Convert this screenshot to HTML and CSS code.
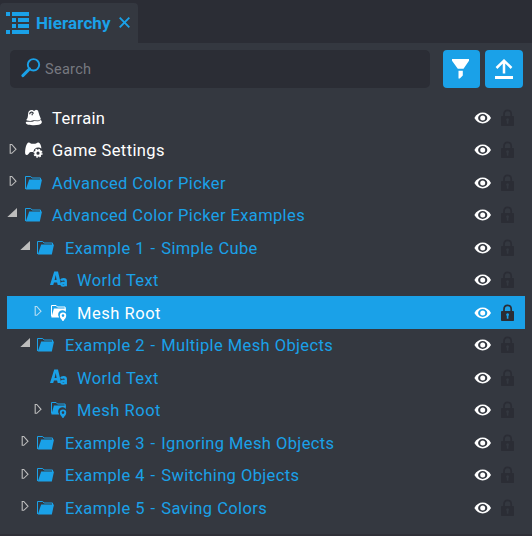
FILE: index.html
```html
<!DOCTYPE html>
<html lang="en">
<head>
<meta charset="utf-8">
<title>Hierarchy</title>
<link rel="stylesheet" href="styles.css">
</head>
<body>
<svg class="defs" aria-hidden="true">
  <symbol id="closed" viewBox="0 0 11 12"><path d="M2.200 1.500v8.800h1.600l4.200-4-4.200-4.800z" fill="none" stroke="currentColor" stroke-width="1.100"/></symbol>
  <symbol id="open" viewBox="0 0 11 12"><path d="M10 1v9H.3z" fill="currentColor"/></symbol>
  <symbol id="folder" viewBox="0 0 18 18"><path d="M.5 15V2.500h5.200l1.400 1.500h8.400v2" fill="none" stroke="currentColor"/><path d="M4.200 5.500h12.800l-2.200 9.900H.8z" fill="currentColor"/></symbol>
  <symbol id="pinfolder" viewBox="0 0 18 18"><path d="M1.500 12.500V1.500h4.600l1.400 1.500h7.600v2" fill="none" stroke="currentColor"/><path d="M3.900 4.500h12.100L15.700 8a4.100 4.100 0 0 0-6.800 4.800l.3.700H1.400z" fill="currentColor"/><path fill-rule="evenodd" d="M13 8.400a3.200 3.200 0 0 1 3.200 3.300c0 2-1.500 3.300-2.800 5.200h-.8c-1.300-1.900-2.800-3.200-2.800-5.200A3.200 3.200 0 0 1 13 8.400zm0 1.900a1.300 1.300 0 1 0 0 2.600 1.300 1.300 0 0 0 0-2.600z" fill="currentColor"/></symbol>
  <symbol id="terrain" viewBox="0 0 18 18"><path d="M1.200 11C2.800 9.700 3 7 3.100 4.700 3.300 2 4.700.9 6.500.9c1.300 0 2 .4 2.500 1.200L11 .8l2 .8 1.400 4.600 1.600 4-2.700 1.200-4.700-.2-3.300.8-3.200-.4z" fill="currentColor"/><path d="M3.200 12.800l4.100-.1 2-.8 3.900.3 2.600-1.200c1 1 1.300 2 .8 3.100-.7 1.500-3.800 2.200-7.600 2.200-4.200 0-7.800-.6-8.200-2.200-.2-1 .5-1.500 2.400-1.300z" fill="currentColor"/><path d="M4.600 5.200C4.900 2.800 7.700 2.500 8.500 4.600M7.200 4.500v1.800" fill="none" stroke="#343840" stroke-width="1.200"/></symbol>
  <symbol id="game" viewBox="0 0 18 18"><path d="M3.700 1.500c1.300-.2 2 1.300 2.800 1.300h3.800c.8 0 1.800-1.600 3.200-1.200 1.800.6 2.800 3.500 2.900 6a5 5 0 0 0-8.100 3.300H5.500C4.200 11.200 3.200 14 1.600 14 .2 14-.1 12.300.2 9.500.5 6.500 1.500 2 3.700 1.500z" fill="currentColor"/><circle cx="13" cy="12.200" r="2.600" fill="none" stroke="currentColor" stroke-width="2"/><circle cx="13" cy="12.200" r="3.900" fill="none" stroke="currentColor" stroke-width="1.400" stroke-dasharray="1.530 1.530"/></symbol>
  <symbol id="textobj" viewBox="0 0 18 18"><path fill-rule="evenodd" d="M4.200.6H8L11.200 14H7.700l-.6-2.400H4L3.200 14H0zM5.800 4L4.600 8.900h2z" fill="currentColor"/><path d="M11 9.500c.7-1.600 4.800-1.900 4.800.5v5.200m0-3.600c-3-.2-4.500.4-4.400 1.900.2 1.600 3.200 1.500 4.400-.2" fill="none" stroke="currentColor" stroke-width="2.300"/></symbol>
  <symbol id="eye" viewBox="0 0 18 12"><path fill-rule="evenodd" d="M.4 6C2.300 2.500 5.200.6 8.700.6S15.100 2.500 17 6c-1.900 3.500-4.800 5.400-8.300 5.400S2.300 9.500.4 6zm3.700 0a4.600 3.900 0 1 0 9.200 0 4.600 3.900 0 1 0-9.200 0z" fill="currentColor"/><circle cx="8.700" cy="6" r="2.500" fill="currentColor"/></symbol>
  <symbol id="lock" viewBox="0 0 14 18"><path d="M3 8V5.200C3 2.800 4.600 1.300 6.600 1.300s3.600 1.500 3.600 3.900V8" fill="none" stroke="currentColor" stroke-width="1.700"/><path fill-rule="evenodd" d="M1.200 7H12c.6 0 1 .4 1 1v8c0 .6-.4 1-1 1H1.200c-.7 0-1.200-.4-1.200-1V8c0-.6.5-1 1.200-1zm5.400 2.300a1.500 1.500 0 0 0-.8 2.700v2.700h1.600V12a1.500 1.500 0 0 0-.8-2.700z" fill="currentColor"/></symbol>
</svg>
<header class="tabs">
  <div class="tab">
    <svg class="tree-icon" viewBox="0 0 23 23"><path d="M0 0h4v4H0zM6 0h17v4H6zM6 6h4v4H6zM12 6h11v4H12zM6 12h4v4H6zM12 12h11v4H12zM0 18h4v4H0zM6 18h17v4H6z" fill="currentColor"/></svg>
    <span class="title">Hierarchy</span>
    <svg class="close" viewBox="0 0 11 11"><path d="M.7.7l9.600 9.600M10.300.7L.7 10.300" stroke="currentColor" stroke-width="1.900"/></svg>
  </div>
</header>
<div class="toolbar">
  <div class="search">
    <svg class="magnifier" viewBox="0 0 20 20"><circle cx="12.500" cy="6.800" r="5.700" fill="none" stroke="currentColor" stroke-width="1.900"/><path d="M8.400 11L2 17.500" stroke="currentColor" stroke-width="3.200" stroke-linecap="round"/></svg>
    <span>Search</span>
  </div>
  <div class="button filter"><svg viewBox="0 0 18 20"><path d="M0 0h17v1.800L11.500 9.800H5.800L0 1.800zM6.500 11.800h4.300v4.700l-3 3H6.500z" fill="currentColor"/></svg></div>
  <div class="button upload"><svg viewBox="0 0 18 20"><path d="M9 14.500V2M1.500 9L9 1.700 16.500 9" fill="none" stroke="currentColor" stroke-width="2.500"/><path d="M0 17h18v3H0z" fill="currentColor"/></svg></div>
</div>
<main class="list">
  <div class="row plain"><span class="arrow"></span><svg class="icon"><use href="#terrain"/></svg><span class="label">Terrain</span><svg class="eye"><use href="#eye"/></svg><svg class="lock"><use href="#lock"/></svg></div>
  <div class="row plain"><svg class="arrow"><use href="#closed"/></svg><svg class="icon"><use href="#game"/></svg><span class="label">Game Settings</span><svg class="eye"><use href="#eye"/></svg><svg class="lock"><use href="#lock"/></svg></div>
  <div class="row"><svg class="arrow"><use href="#closed"/></svg><svg class="icon"><use href="#folder"/></svg><span class="label">Advanced Color Picker</span><svg class="eye"><use href="#eye"/></svg><svg class="lock"><use href="#lock"/></svg></div>
  <div class="row"><svg class="arrow open"><use href="#open"/></svg><svg class="icon"><use href="#folder"/></svg><span class="label">Advanced Color Picker Examples</span><svg class="eye"><use href="#eye"/></svg><svg class="lock"><use href="#lock"/></svg></div>
  <div class="row level1"><svg class="arrow open"><use href="#open"/></svg><svg class="icon"><use href="#folder"/></svg><span class="label">Example 1 <span class="dash">-</span> Simple Cube</span><svg class="eye"><use href="#eye"/></svg><svg class="lock"><use href="#lock"/></svg></div>
  <div class="row level2"><span class="arrow"></span><svg class="icon"><use href="#textobj"/></svg><span class="label">World Text</span><svg class="eye"><use href="#eye"/></svg><svg class="lock"><use href="#lock"/></svg></div>
  <div class="row level2 selected"><svg class="arrow"><use href="#closed"/></svg><svg class="icon"><use href="#pinfolder"/></svg><span class="label mesh">Mesh Root</span><svg class="eye"><use href="#eye"/></svg><svg class="lock"><use href="#lock"/></svg></div>
  <div class="row level1"><svg class="arrow open"><use href="#open"/></svg><svg class="icon"><use href="#folder"/></svg><span class="label">Example 2 <span class="dash">-</span> Multiple Mesh Objects</span><svg class="eye"><use href="#eye"/></svg><svg class="lock"><use href="#lock"/></svg></div>
  <div class="row level2"><span class="arrow"></span><svg class="icon"><use href="#textobj"/></svg><span class="label">World Text</span><svg class="eye"><use href="#eye"/></svg><svg class="lock"><use href="#lock"/></svg></div>
  <div class="row level2"><svg class="arrow"><use href="#closed"/></svg><svg class="icon"><use href="#pinfolder"/></svg><span class="label mesh">Mesh Root</span><svg class="eye"><use href="#eye"/></svg><svg class="lock"><use href="#lock"/></svg></div>
  <div class="row level1"><svg class="arrow"><use href="#closed"/></svg><svg class="icon"><use href="#folder"/></svg><span class="label">Example 3 <span class="dash">-</span> Ignoring Mesh Objects</span><svg class="eye"><use href="#eye"/></svg><svg class="lock"><use href="#lock"/></svg></div>
  <div class="row level1"><svg class="arrow"><use href="#closed"/></svg><svg class="icon"><use href="#folder"/></svg><span class="label">Example 4 <span class="dash">-</span> Switching Objects</span><svg class="eye"><use href="#eye"/></svg><svg class="lock"><use href="#lock"/></svg></div>
  <div class="row level1"><svg class="arrow"><use href="#closed"/></svg><svg class="icon"><use href="#folder"/></svg><span class="label">Example 5 <span class="dash">-</span> Saving Colors</span><svg class="eye"><use href="#eye"/></svg><svg class="lock"><use href="#lock"/></svg></div>
</main>
<footer class="edge"></footer>
</body>
</html>
```
FILE: styles.css
```css
* { box-sizing: border-box; }
body {
  margin: 0;
  height: 536px;
  overflow: hidden;
  display: flex;
  flex-direction: column;
  background: #343840;
  color: #1aa1e8;
  font-family: Roboto, sans-serif;
  font-size: 16.500px;
}
svg { display: block; flex: none; }
.defs { width: 0; height: 0; position: absolute; }
.tabs {
  height: 43px;
  flex: none;
  padding-top: 3px;
  background: #2b2d35;
}
.tab {
  width: 138px;
  height: 40px;
  display: flex;
  align-items: center;
  padding-left: 6px;
  background: #343840;
  border-radius: 4px 4px 0 0;
}
.tree-icon { width: 23px; height: 23px; }
.title {
  width: 82px;
  margin-left: 7px;
  font-size: 17px;
  font-weight: 700;
  letter-spacing: 0.100px;
}
.close { width: 11px; height: 11px; margin: -1px 0 0 1px; }
.toolbar {
  display: flex;
  flex: none;
  height: 58.300px;
  padding: 7px 9px 0 10px;
}
.search {
  width: 420px;
  height: 38px;
  display: flex;
  align-items: center;
  padding-left: 11px;
  gap: 4px;
  background: #2b2d35;
  border-radius: 5px;
  color: #777980;
  font-size: 14.500px;
  letter-spacing: 0.300px;
}
.magnifier { width: 20px; height: 20px; color: #1aa1e8; margin-top: -3px; }
.button {
  height: 38px;
  display: flex;
  align-items: center;
  justify-content: center;
  background: #1aa1e8;
  border-radius: 4px;
  color: #fff;
}
.button svg { width: 18px; height: 20px; }
.filter { width: 37px; margin-left: 13px; }
.filter svg { margin-right: 2px; }
.upload { width: 38px; margin-left: 5px; }
.list { flex: 1; padding: 0 7px; }
.row {
  height: 32.500px;
  display: flex;
  align-items: center;
  padding-right: 11px;
}
.arrow { width: 11px; height: 12px; color: #bdbdbd; margin: -3px 6px 0 1px; }
.row > .arrow { flex: none; }
.open { margin: -4px 7px 0 0; }
.icon { width: 18px; height: 18px; margin-right: 9px; }
.label {
  flex: 1;
  line-height: 20px;
  padding-top: 2.400px;
  white-space: nowrap;
  letter-spacing: 0.370px;
  word-spacing: 0.200px;
}
.mesh { letter-spacing: 0.500px; }
.dash { margin: 0 1px; }
.level1 { padding-left: 12px; }
.level1 .open { margin: -4px 6px 0 1px; }
.level1 .icon { margin-right: 10px; }
.level2 { padding-left: 25px; }
.plain { color: #fff; }
.selected { background: #1aa1e8; color: #fff; }
.eye { width: 18px; height: 12px; color: #fff; margin-right: 9px; }
.lock { width: 14px; height: 18px; color: #2b2d35; margin-right: -1px; }
.selected .arrow { color: #b8def3; }
.edge { height: 2px; background: #2f3038; }
```
